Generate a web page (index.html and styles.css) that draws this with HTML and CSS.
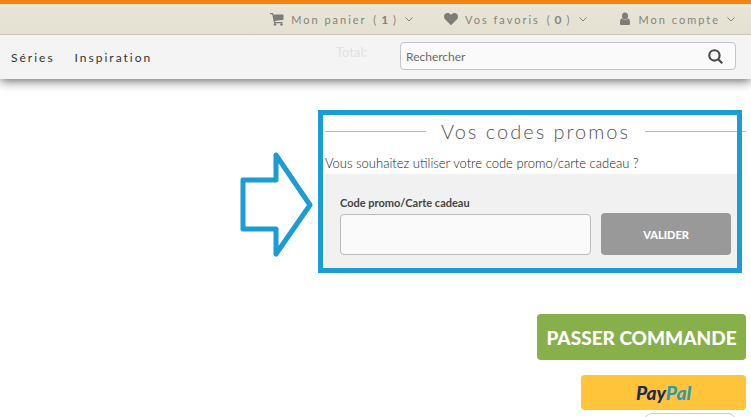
FILE: index.html
```
<!DOCTYPE html>
<html lang="fr">
<head>
  <meta charset="UTF-8">
  <meta name="viewport" content="width=device-width, initial-scale=1.0">
  <title>Mon panier</title>
  <link rel="stylesheet" href="styles.css">
</head>
<body>

<header class="header">
  <!-- Account bar -->
  <div class="topbar">
    <a href="#" class="topbar-link">
      <svg class="icon" viewBox="0 0 14 14"><path d="M0 1h3l.4 1.500H13.500v5.200L4.800 9l.2 1h7.500v1.200H4L2.200 2.300H0z"/><circle cx="5" cy="12.500" r="1.300"/><circle cx="11.500" cy="12.500" r="1.300"/></svg>
      <span>Mon panier <span class="count">(<b>1</b>)</span></span>
      <svg class="caret" viewBox="0 0 8 5"><path d="M.5.500l3.500 3.500 3.500-3.500"/></svg>
    </a>
    <a href="#" class="topbar-link">
      <svg class="icon" viewBox="0 0 14 14"><path d="M7 13.200L1 7.300C-.4 5.700-.2 3 1.300 1.800 3 .5 5.500.9 7 3 8.500.9 11 .5 12.700 1.800 14.200 3 14.400 5.700 13 7.300z"/></svg>
      <span>Vos favoris <span class="count">(<b>0</b>)</span></span>
      <svg class="caret" viewBox="0 0 8 5"><path d="M.5.500l3.500 3.500 3.500-3.500"/></svg>
    </a>
    <a href="#" class="topbar-link">
      <svg class="icon" viewBox="0 0 14 14"><ellipse cx="7" cy="4" rx="3" ry="3.500"/><path d="M4 6.300C2.600 6.800 2 8.500 2 10.500v1.200c0 .8.600 1.300 1.400 1.300h7.200c.8 0 1.400-.5 1.400-1.300v-1.200c0-2-.6-3.700-2-4.200-1.500 2-4.500 2-6 0z"/></svg>
      <span>Mon compte</span>
      <svg class="caret" viewBox="0 0 8 5"><path d="M.5.500l3.500 3.500 3.500-3.500"/></svg>
    </a>
  </div>

  <!-- Main navigation -->
  <div class="navbar">
    <nav class="nav">
      <a href="#">Séries</a>
      <a href="#">Inspiration</a>
    </nav>
    <span class="total">Total:</span>
    <form class="search">
      <input type="text" placeholder="Rechercher" aria-label="Rechercher">
      <button type="button" aria-label="Lancer la recherche">
        <svg viewBox="0 0 14 14"><circle cx="6" cy="6" r="4.800"/><path d="M9.500 9.500l3.800 3.800"/></svg>
      </button>
    </form>
  </div>
</header>

<main class="main">
  <section class="promo">
    <h2>Vos codes promos</h2>
    <p>Vous souhaitez utiliser votre code promo/carte cadeau ?</p>
    <form class="promo-form">
      <div class="field">
        <label for="code">Code promo/Carte cadeau</label>
        <input type="text" id="code">
      </div>
      <button type="button">VALIDER</button>
    </form>
    <!-- Highlight frame and arrow -->
    <div class="highlight"></div>
    <svg class="arrow" viewBox="0 0 74 106"><path d="M3 28H36V3L70 53 36 102V77H3z"/></svg>
  </section>

  <button type="button" class="order">PASSER COMMANDE</button>
  <button type="button" class="paypal"><span class="pay">Pay</span><span class="pal">Pal</span></button>
  <div class="more"></div>
</main>

</body>
</html>
```
FILE: styles.css
```
* {
  box-sizing: border-box;
}
body {
  margin: 0;
  height: 100vh;
  overflow: hidden;
  font-family: Lato, "Liberation Sans", sans-serif;
  font-size: 13px;
  color: #444;
  background-color: #fff;
}
a {
  color: inherit;
  text-decoration: none;
}
button {
  border: none;
  font-family: inherit;
  cursor: pointer;
}

/* Header */
.header {
  box-shadow: 0 2px 10px rgba(0, 0, 0, 0.6);
}
.topbar {
  display: flex;
  justify-content: flex-end;
  align-items: center;
  gap: 31px;
  height: 35px;
  padding-right: 16px;
  border-top: 4px solid #ee8512;
  border-bottom: 1px solid #c9c7ba;
  background: linear-gradient(#fbe6c0, #e9e5d6 2px, #e5e1d2);
  color: #85837b;
}
.topbar-link {
  display: flex;
  align-items: center;
  gap: 7px;
  font-size: 11px;
  letter-spacing: 2px;
}
.count {
  margin-left: 2px;
}
.count b {
  margin: 0 3px;
  font-size: 12px;
}
.icon {
  width: 14px;
  height: 14px;
  fill: #7d7c77;
}
.caret {
  width: 8px;
  height: 5px;
  fill: none;
  stroke: #85837b;
}
.navbar {
  display: flex;
  align-items: center;
  height: 44px;
  padding: 0 15px 0 11px;
  background-color: #f4f4f4;
}
.nav {
  display: flex;
  flex: 1;
  gap: 20px;
  color: #333;
  font-size: 12px;
  letter-spacing: 2px;
}
.total {
  width: 64px;
  padding-bottom: 10px;
  color: #e2e2e2;
}
.search {
  display: flex;
  width: 336px;
  height: 28px;
  margin-bottom: 2px;
  border: 1px solid #c3c3cb;
  border-radius: 4px;
  background-color: #fafafa;
}
.search input {
  flex: 1;
  padding: 0 5px;
  border: none;
  background: none;
  font: inherit;
  font-size: 12px;
}
.search input::placeholder {
  color: #6a6a6a;
}
.search button {
  display: flex;
  align-items: center;
  padding: 0 12px;
  background: none;
}
.search svg {
  width: 15px;
  height: 15px;
  fill: none;
  stroke: #484848;
  stroke-width: 2;
}

/* Promo codes */
.main {
  display: flex;
  flex-direction: column;
  align-items: flex-end;
  padding: 36px 5px 0;
}
.promo {
  position: relative;
  width: 100%;
  max-width: 421px;
}
.promo h2 {
  display: flex;
  align-items: center;
  gap: 15px;
  margin: 0;
  font-size: 20px;
  font-weight: 300;
  line-height: 32px;
  letter-spacing: 2px;
  color: #555;
}
.promo h2::before,
.promo h2::after {
  content: "";
  flex: 1;
  height: 1px;
  background-color: #bbb;
}
.promo p {
  margin: 0;
  padding: 6px 0 1px;
  font-weight: 300;
  line-height: 20px;
  color: #222;
}
.promo-form {
  display: flex;
  align-items: flex-end;
  gap: 10px;
  margin-right: 5px;
  padding: 20px 10px 13px 15px;
  background-color: #f1f1f1;
}
.field {
  flex: 1;
}
.field label {
  display: block;
  margin-bottom: 2px;
  font-size: 11px;
  font-weight: bold;
  line-height: 18px;
}
.field input {
  display: block;
  width: 100%;
  height: 41px;
  padding: 0 10px;
  border: 1px solid #bbb;
  border-radius: 4px;
  background-color: #fafafa;
}
.promo-form button {
  width: 130px;
  height: 42px;
  border-radius: 4px;
  background-color: #999;
  color: #fff;
  font-size: 11px;
  font-weight: 900;
}
.highlight {
  position: absolute;
  top: -5px;
  right: 4px;
  bottom: -5px;
  left: -7px;
  border: 5px solid #1b9cd2;
  pointer-events: none;
}
.arrow {
  position: absolute;
  top: 37px;
  left: -85px;
  width: 74px;
  height: 106px;
  fill: none;
  stroke: #1b9cd2;
  stroke-width: 5;
  stroke-linejoin: round;
}

/* Checkout buttons */
.order {
  width: 209px;
  height: 46px;
  margin-top: 46px;
  padding: 0;
  border-radius: 4px;
  background-color: #87b04a;
  color: #fff;
  font-size: 19px;
  font-weight: 900;
}
.paypal {
  width: 165px;
  height: 35px;
  margin-top: 15px;
  border-radius: 4px;
  background-color: #ffc439;
  font-size: 19px;
  font-style: italic;
  font-weight: 900;
}
.pay {
  color: #1c2c56;
}
.pal {
  color: #2a9bb8;
}
.more {
  width: 92px;
  height: 20px;
  margin: 3px 10px 0 0;
  border: 1px solid #ccc;
  border-radius: 8px;
}
```
